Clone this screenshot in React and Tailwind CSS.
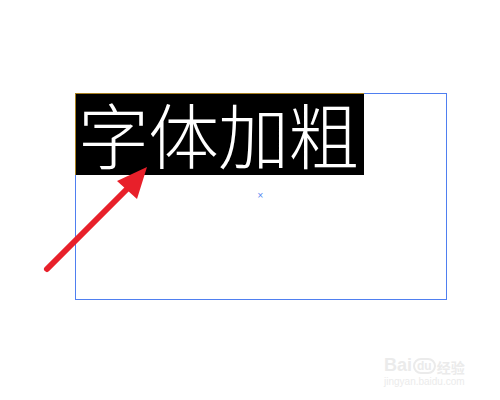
export default function App() {
  return (
    <div className="relative w-[500px] h-[400px] bg-white overflow-hidden">
      <div className="pt-[93px] pl-[75px]">
        <div className="w-[372px] h-[207px] border border-[#4f7ff0] relative">
          <div className="absolute -top-px -left-px w-[289px] h-[82px] bg-black border-t border-l border-[#a88020] flex items-center pl-[2px] pb-[4px]">
            <span
              className="text-white text-[71px] leading-none font-light tracking-[-1px] whitespace-nowrap"
              style={{ fontFamily: '"Noto Sans CJK SC", "Noto Sans CJK JP", sans-serif' }}
            >
              字体加粗
            </span>
          </div>
          <div className="absolute left-[181px] top-[98px] text-[#4f7ff0] text-[8px] leading-none" style={{ fontFamily: '"DejaVu Sans", sans-serif' }}>×</div>
        </div>
      </div>
      <svg className="absolute left-0 top-0" width="500" height="400" viewBox="0 0 500 400">
        <line x1="47" y1="269" x2="128" y2="188" stroke="#e8202a" strokeWidth="6" strokeLinecap="round" />
        <polygon points="147,167 117,181 137,199" fill="#e8202a" />
      </svg>
      <div className="absolute left-[384px] top-[356px] text-[#ebebeb] leading-none" style={{ fontFamily: '"Liberation Sans", sans-serif' }}>
        <div className="flex items-end gap-[1px]">
          <span className="text-[18px] font-bold">Bai</span>
          <span className="text-[12px] font-bold border-2 border-[#ebebeb] rounded-full px-[2px]">du</span>
          <span className="text-[14px] font-bold" style={{ fontFamily: '"Noto Sans CJK SC", sans-serif' }}>经验</span>
        </div>
        <div className="text-[10px] mt-[3px]">jingyan.baidu.com</div>
      </div>
    </div>
  );
}
